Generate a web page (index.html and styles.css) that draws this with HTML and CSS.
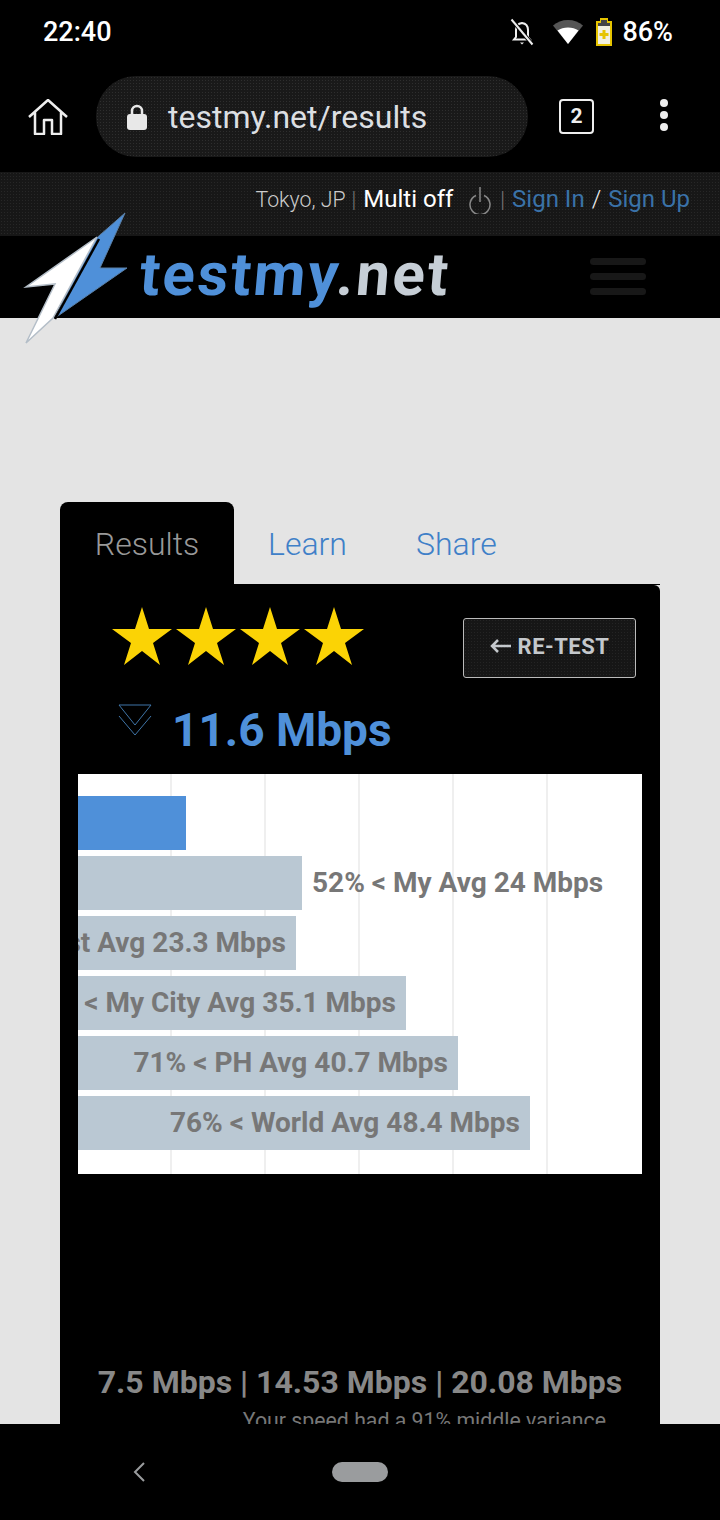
FILE: index.html
```html
<!DOCTYPE html>
<html lang="en">
<head>
    <meta charset="UTF-8">
    <meta name="viewport" content="width=device-width, initial-scale=1.0">
    <title>testmy.net results</title>
    <link rel="stylesheet" href="styles.css">
</head>
<body>
    <div class="status-bar">
        <span class="time">22:40</span>
        <div class="status-icons">
            <svg class="bell-off" width="24" height="28" viewBox="0 0 24 28">
                <path d="M6 19V12c0-4 2.500-6.500 6-7 3.500.5 6 3 6 7v7l2 2.500H4z" fill="none" stroke="#eee" stroke-width="2"/>
                <path d="M10 24.500h4l-2 2z" fill="#eee"/>
                <path d="M2 2l20 24" stroke="#000" stroke-width="4"/>
                <path d="M1.500 1.500l21 25" stroke="#eee" stroke-width="2"/>
            </svg>
            <svg class="wifi" width="30" height="24" viewBox="0 0 30 24">
                <path d="M0 5.500C4 2 9 0 15 0s11 2 15 5.500L15 24z" fill="#555"/>
                <path d="M4.500 10.500C7.500 8.500 11 7.500 15 7.500s7.500 1 10.500 3L15 24z" fill="#fff"/>
            </svg>
            <svg class="battery" width="16" height="28" viewBox="0 0 16 28">
                <path d="M5 1h6v3h4v23H1V4h4z" fill="#f2f0e0" stroke="#e6c400" stroke-width="2"/>
                <path d="M5 2h6v3h3v3H2V5h3z" fill="#444"/>
                <path d="M6.500 12h3v3h3v3h-3v3h-3v-3h-3v-3h3z" fill="#e6c400"/>
            </svg>
            <span class="battery-level">86%</span>
        </div>
    </div>

    <div class="toolbar">
        <svg class="home-icon" width="40" height="36" viewBox="0 0 40 36">
            <path d="M1 18L20 1l19 17M7 13v22h9V21h8v14h9V13" fill="none" stroke="#eee" stroke-width="2.500" stroke-linejoin="round"/>
        </svg>
        <div class="address-bar">
            <svg class="lock" width="20" height="26" viewBox="0 0 20 26">
                <path d="M5 11V7a5 5 0 0 1 10 0v4" fill="none" stroke="#e8e8e8" stroke-width="2.500"/>
                <rect y="10" width="20" height="16" rx="3" fill="#e8e8e8"/>
            </svg>
            <span class="url">testmy.net/results</span>
        </div>
        <div class="tab-count">2</div>
        <div class="menu-dots"><i></i><i></i><i></i></div>
    </div>

    <div class="top-bar">
        <span class="location">Tokyo, JP</span>
        <span class="sep">|</span>
        <span class="multi">Multi off</span>
        <svg class="power" width="22" height="28" viewBox="0 0 22 28">
            <path d="M7 9.500a10 10 0 1 0 8 0" fill="none" stroke="#888" stroke-width="1.500"/>
            <path d="M11 1v15" stroke="#888" stroke-width="1.500"/>
        </svg>
        <span class="sep">|</span>
        <a class="sign">Sign In</a>
        <span class="slash">/</span>
        <a class="sign">Sign Up</a>
    </div>

    <header class="site-header">
        <svg class="bolt" width="110" height="134" viewBox="0 0 110 134">
            <path d="M107 1L82 56h27L37 106 74 30z" fill="#4f90d9" stroke="#5a7fa5"/>
            <path d="M79 25L8 75l29-3-29 59 27-25 44-81z" fill="#fff" stroke="#b4bec8" stroke-width="1.500"/>
            <path d="M81 27L37 107" stroke="#000" stroke-width="2.500"/>
        </svg>
        <div class="logo-text">testmy<span>.net</span></div>
        <div class="hamburger"><i></i><i></i><i></i></div>
    </header>

    <main class="page">
        <nav class="tabs">
            <a class="tab active">Results</a>
            <a class="tab learn">Learn</a>
            <a class="tab share">Share</a>
        </nav>
        <section class="panel">
            <div class="rating-row">
                <div class="stars">
                    <svg width="60" height="58" viewBox="0 0 60 58"><path d="M30 0l7 22h23L41 36l7 22-18-14-18 14 7-22L0 22h23z"/></svg>
                    <svg width="60" height="58" viewBox="0 0 60 58"><path d="M30 0l7 22h23L41 36l7 22-18-14-18 14 7-22L0 22h23z"/></svg>
                    <svg width="60" height="58" viewBox="0 0 60 58"><path d="M30 0l7 22h23L41 36l7 22-18-14-18 14 7-22L0 22h23z"/></svg>
                    <svg width="60" height="58" viewBox="0 0 60 58"><path d="M30 0l7 22h23L41 36l7 22-18-14-18 14 7-22L0 22h23z"/></svg>
                </div>
                <button class="retest">
                    <svg width="21" height="14" viewBox="0 0 21 14">
                        <path d="M21 7H3M8 1L2 7l6 6" fill="none" stroke="#c4c8cc" stroke-width="2.500"/>
                    </svg>
                    RE-TEST
                </button>
            </div>
            <div class="speed-row">
                <svg class="down-icon" width="34" height="32" viewBox="0 0 34 32">
                    <path d="M1 1h32L17 21z" fill="none" stroke="#3f75a8"/>
                    <path d="M1 12l16 19 16-19" fill="none" stroke="#3f75a8"/>
                </svg>
                <span class="speed">11.6 Mbps</span>
            </div>
            <div class="chart">
                <div class="bar mine" style="width: 108px"></div>
                <div class="bar-line">
                    <div class="bar" style="width: 224px"></div>
                    <span class="bar-label">52% &lt; My Avg 24 Mbps</span>
                </div>
                <div class="bar" style="width: 218px"><span class="bar-label">47% &lt; Host Avg 23.3 Mbps</span></div>
                <div class="bar" style="width: 328px"><span class="bar-label">67% &lt; My City Avg 35.1 Mbps</span></div>
                <div class="bar" style="width: 380px"><span class="bar-label">71% &lt; PH Avg 40.7 Mbps</span></div>
                <div class="bar" style="width: 452px"><span class="bar-label">76% &lt; World Avg 48.4 Mbps</span></div>
            </div>
            <p class="stats">7.5 Mbps | 14.53 Mbps | 20.08 Mbps</p>
            <p class="variance">Your speed had a 91% middle variance</p>
        </section>
    </main>

    <div class="nav-bar">
        <svg class="back" width="12" height="20" viewBox="0 0 12 20">
            <path d="M11 1L2 10l9 9" fill="none" stroke="#9a9c9e" stroke-width="2"/>
        </svg>
        <div class="pill"></div>
    </div>
</body>
</html>
```

FILE: styles.css
```css
* {
    box-sizing: border-box;
}

body {
    margin: 0;
    width: 720px;
    height: 1520px;
    overflow: hidden;
    display: flex;
    flex-direction: column;
    font-family: Roboto, "Liberation Sans", sans-serif;
    background-color: #000;
}

/* phone chrome */
.status-bar {
    height: 58px;
    flex: none;
    display: flex;
    justify-content: space-between;
    align-items: center;
    padding: 5px 47px 0 43px;
    color: #fff;
    font-size: 27px;
    font-weight: 500;
}

.status-icons {
    display: flex;
    align-items: center;
}

.wifi {
    margin-left: 19px;
}

.battery {
    margin-left: 13px;
}

.battery-level {
    margin-left: 10px;
}

.toolbar {
    height: 114px;
    flex: none;
    display: flex;
    align-items: flex-start;
    padding: 18px 0 0 28px;
}

.home-icon {
    margin-top: 23px;
}

.address-bar {
    width: 432px;
    height: 81px;
    margin-left: 28px;
    padding-left: 31px;
    display: flex;
    align-items: center;
    border-radius: 40px;
    background-color: #191919;
    background-image: radial-gradient(#2e2e2e 0.7px, transparent 0.8px);
    background-size: 3px 3px;
}

.url {
    margin-left: 21px;
    color: #dcdfe2;
    font-size: 32px;
}

.tab-count {
    width: 35px;
    height: 35px;
    margin: 23px 0 0 31px;
    border: 2.500px solid #eee;
    border-radius: 4px;
    color: #eee;
    font-size: 21px;
    font-weight: 700;
    line-height: 30px;
    text-align: center;
}

.menu-dots {
    margin: 23px 0 0 66px;
    display: flex;
    flex-direction: column;
    gap: 4px;
}

.menu-dots i {
    width: 8px;
    height: 8px;
    border-radius: 50%;
    background: #eee;
}

/* site header */
.top-bar {
    height: 64px;
    flex: none;
    display: flex;
    justify-content: flex-end;
    align-items: center;
    padding: 0 30px 10px 0;
    background-color: #171717;
    background-image: radial-gradient(#272727 0.8px, transparent 0.9px);
    background-size: 3px 3px;
    color: #ccc;
    font-size: 21.300px;
    font-weight: 300;
}

.top-bar .sep {
    margin: 0 7px 0 6px;
    color: #777;
}

.multi {
    color: #fff;
    font-size: 24px;
    font-weight: 400;
}

.power {
    margin: 2px 3px 0 16px;
}

.sign {
    color: #3a72a8;
    font-size: 24px;
    font-weight: 400;
}

.slash {
    margin: 0 7px;
    color: #eee;
    font-size: 24px;
}

.site-header {
    position: relative;
    z-index: 1;
    height: 82px;
    flex: none;
    display: flex;
    align-items: center;
    justify-content: space-between;
    padding: 0 74px 0 140px;
    background: #000;
}

.bolt {
    position: absolute;
    left: 18px;
    top: -24px;
}

.logo-text {
    margin-top: -4px;
    color: #4f90d9;
    font-family: Roboto, sans-serif;
    font-size: 60px;
    font-weight: 700;
    line-height: 82px;
    letter-spacing: 2.500px;
    transform: skewX(-5deg);
}

.logo-text span {
    color: #c6ced6;
}

.hamburger {
    display: flex;
    flex-direction: column;
    gap: 8px;
    margin-top: -2px;
}

.hamburger i {
    width: 56px;
    height: 7px;
    border-radius: 4px;
    background: #181818;
}

/* page */
.page {
    flex: 1;
    min-height: 0;
    overflow: hidden;
    padding: 184px 60px 0;
    background: #e4e4e4;
}

.tabs {
    height: 83px;
    display: flex;
    border-bottom: 1px solid #000;
}

.tab {
    color: #3f80c8;
    font-size: 32px;
    font-weight: 300;
    line-height: 84px;
}

.tab.active {
    width: 174px;
    height: 83px;
    background: #000;
    border-radius: 8px 8px 0 0;
    color: #999;
    text-align: center;
}

.tab.learn {
    margin-left: 34px;
}

.tab.share {
    margin-left: 69px;
}

.panel {
    height: 900px;
    padding: 22px 18px 0;
    background: #000;
    border-radius: 0 6px 0 0;
}

.rating-row {
    height: 71px;
    display: flex;
    justify-content: space-between;
    align-items: flex-start;
    padding: 0 6px 0 34px;
}

.stars {
    display: flex;
    gap: 4px;
}

.stars path {
    fill: #fbd305;
}

.retest {
    width: 173px;
    height: 60px;
    margin-top: 11px;
    padding: 0 0 4px;
    display: flex;
    justify-content: center;
    align-items: center;
    gap: 7px;
    border: 1.500px solid #bbb;
    border-radius: 3px;
    background-color: #161616;
    background-image: radial-gradient(#242424 0.8px, transparent 0.9px);
    background-size: 3px 3px;
    color: #c4c8cc;
    font-family: Roboto, sans-serif;
    font-size: 22px;
    font-weight: 700;
    letter-spacing: 0.500px;
}

.speed-row {
    height: 70px;
    margin-top: 26px;
    display: flex;
    align-items: flex-start;
    padding-left: 40px;
}

.speed {
    margin-left: 20px;
    color: #4f90d9;
    font-size: 46px;
    font-weight: 700;
    line-height: 52px;
}

.chart {
    height: 400px;
    padding-top: 22px;
    display: flex;
    flex-direction: column;
    gap: 6px;
    overflow: hidden;
    background-color: #fff;
    background-image: repeating-linear-gradient(to right, transparent 0 92px, #efefef 92px 94px);
    background-size: 470px 100%;
    background-repeat: no-repeat;
}

.bar {
    height: 54px;
    flex: none;
    display: flex;
    justify-content: flex-end;
    align-items: center;
    padding-right: 10px;
    background: #bac8d3;
}

.bar.mine {
    background: #4f90d9;
}

.bar-line {
    display: flex;
    align-items: center;
}

.bar-line .bar-label {
    margin-left: 10px;
}

.bar-label {
    flex: none;
    margin-top: -2px;
    color: #777;
    font-size: 28px;
    font-weight: 700;
    white-space: nowrap;
}

.stats {
    margin: 190px 0 0;
    color: #888;
    font-size: 32px;
    font-weight: 700;
    line-height: 36px;
    text-align: center;
}

.variance {
    margin: 8px 0 0;
    padding-right: 36px;
    color: #777;
    font-size: 21.300px;
    text-align: right;
}

.nav-bar {
    height: 96px;
    flex: none;
    display: flex;
    align-items: center;
    padding: 0 0 0 133px;
    background: #000;
}

.pill {
    width: 56px;
    height: 20px;
    margin-left: 187px;
    border-radius: 10px;
    background: #9a9c9e;
}
```
